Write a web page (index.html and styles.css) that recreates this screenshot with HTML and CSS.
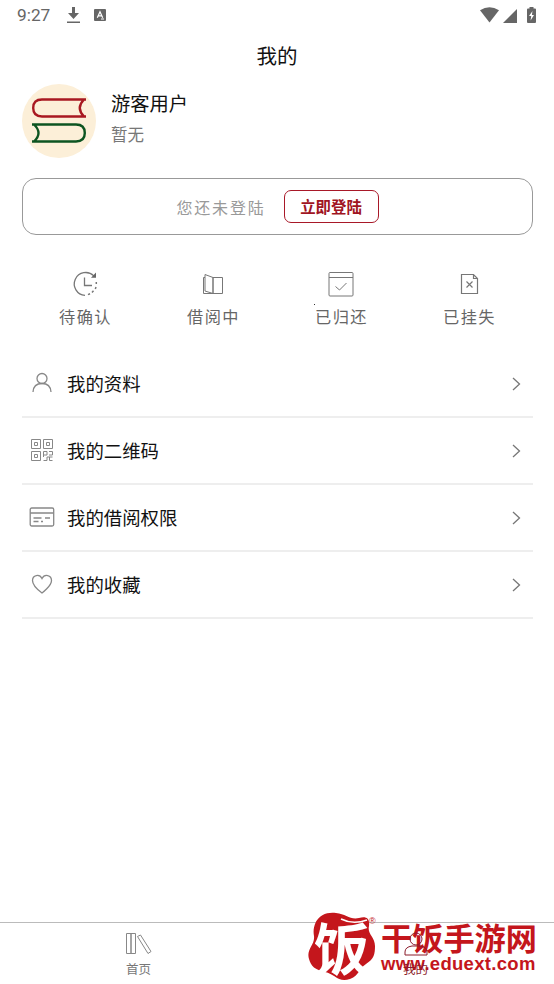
FILE: index.html
```html
<!DOCTYPE html>
<html lang="zh-CN">
<head>
<meta charset="utf-8">
<title>我的</title>
<link rel="stylesheet" href="styles.css">
</head>
<body>
<div class="screen">
  <div class="status">
    <span class="time">9:27</span>
    <svg class="download" width="13" height="17" viewBox="0 0 13 17"><path d="M5 0h3v6h4l-5.500 6L1 6h4zM0 14.500h13v1.600H0z"/></svg>
    <svg class="keyboard" width="12" height="12" viewBox="0 0 12 12"><rect width="12" height="12" rx="1"/><path d="M3.300 8.700L6 2.800l2.700 5.900M4.300 6.800h3.400M7 10h3" fill="none" stroke="#fff" stroke-width="1.200"/></svg>
    <span class="grow"></span>
    <svg width="19" height="16" viewBox="0 0 19 16"><path d="M0 3.200Q9.500-2.800 19 3.200L9.500 15.500z"/></svg>
    <svg class="signal" width="14" height="14" viewBox="0 0 14 14"><path d="M14 0v14H0z"/></svg>
    <svg class="battery" width="9" height="16" viewBox="0 0 9 16"><path d="M2.500 0h4v1.500H8q1 0 1 1V15q0 1-1 1H1q-1 0-1-1V2.500q0-1 1-1h1.500z"/><path d="M5.500 4L2 9h2.200L3.600 13.500 7 8H4.900z" fill="#fff"/></svg>
  </div>
  <h1>我的</h1>
  <div class="profile">
    <div class="avatar">
      <svg width="54" height="46" viewBox="0 0 54 46" fill="none" stroke-width="2.400"><path stroke="#a81820" d="M54 1.500H10Q1.200 1.500 1.200 10T10 18.500H54M52 1.500Q43.500 10 52 18.500"/><path stroke="#0c5420" d="M0 26.500H44Q52.800 26.500 52.800 35T44 43.500H0M2 26.500Q11 35 2 43.500"/></svg>
    </div>
    <div><div class="name">游客用户</div><div class="sub">暂无</div></div>
  </div>
  <div class="login"><span>您还未登陆</span><button>立即登陆</button></div>
  <div class="shortcuts">
    <div class="shortcut"><svg width="28" height="28" viewBox="0 0 28 28"><path d="M14 25.300A11.400 11.400 0 1 1 22.800 5.900M13.500 7.500v8h7.500" stroke-width="1.300"/><path d="M25 2.500v5.200h-5z" fill="#666" stroke="none"/><path d="M25.300 12v2M25 17l-.7 2M22.500 20.800l-1.500 1.600M19 23.700l-2 .9" stroke-width="1.500"/></svg><span>待确认</span></div>
    <div class="shortcut"><svg width="28" height="28" viewBox="0 0 28 28"><path d="M14 7.500h9.500v16H14zM6 4.500l8 3v16l-8-2.500zM6 7.500H4.500v16H14"/></svg><span>借阅中</span></div>
    <div class="shortcut"><svg width="28" height="28" viewBox="0 0 28 28"><rect x="2" y="2.500" width="24" height="23.500" rx="1"/><path d="M2 7.500h24M8.500 16.500l4 3.500 7-7"/></svg><span>已归还</span></div>
    <div class="shortcut"><svg width="28" height="28" viewBox="0 0 28 28"><path d="M18.500 4.500h-12v19h16v-15l-4-4zv4h4M11.500 11.500l6 6M17.500 11.500l-6 6" stroke-width="1.200"/></svg><span>已挂失</span></div>
    <i class="speck"></i>
  </div>
  <div class="menu">
    <div class="row"><svg class="icon" width="26" height="26" viewBox="0 0 26 26"><circle cx="13" cy="8.500" r="5"/><path d="M4 22Q4.500 13.500 13 13.500T22 22"/></svg><span>我的资料</span><svg class="chevron" width="9" height="14" viewBox="0 0 9 14"><path d="M1 1l6.500 6L1 13"/></svg></div>
    <div class="row"><svg class="icon qr" width="26" height="26" viewBox="0 0 26 26"><path d="M2.500 2.500h9v9h-9zM14.500 2.500h9v9h-9zM2.500 14.500h9v9h-9zM5.500 5.500h3v3h-3zM17.500 5.500h3v3h-3zM5.500 17.500h3v3h-3zM14.500 20v-5.500H18V18h-3.500M20 14.500h3.500V18H20M14.500 23.500H18V20h5.500M20.500 20v3.500h3"/></svg><span>我的二维码</span><svg class="chevron" width="9" height="14" viewBox="0 0 9 14"><path d="M1 1l6.500 6L1 13"/></svg></div>
    <div class="row"><svg class="icon" width="26" height="26" viewBox="0 0 26 26"><rect x="1.200" y="4" width="23.500" height="18" rx="1.500"/><path d="M1.200 9h23.500M4.500 14h8M16 14h5M4.500 17.500h5M12 17.500h2"/></svg><span>我的借阅权限</span><svg class="chevron" width="9" height="14" viewBox="0 0 9 14"><path d="M1 1l6.500 6L1 13"/></svg></div>
    <div class="row"><svg class="icon" width="26" height="26" viewBox="0 0 26 26"><path d="M13 22Q3.500 15 3.500 9.500C3.500 4 10.500 2.500 13 7.500 15.500 2.500 22.500 4 22.500 9.500 22.500 15 13 22 13 22z"/></svg><span>我的收藏</span><svg class="chevron" width="9" height="14" viewBox="0 0 9 14"><path d="M1 1l6.500 6L1 13"/></svg></div>
  </div>
  <div class="tabs">
    <div class="tab"><svg width="28" height="26" viewBox="0 0 28 26"><path d="M1.500 2.500H6v20H1.500zM6 2.500h4.500v20H6zM12.500 5.500l3-1.500 10.500 16.500-3 2z"/></svg><span>首页</span></div>
    <div class="tab active"><svg width="28" height="26" viewBox="0 0 28 26"><circle cx="14" cy="8" r="6"/><path d="M3 24v-3q0-5 7-6h8q7 1 7 6v3z"/></svg><span>我的</span></div>
  </div>
  <div class="watermark">
    <div class="seal">
      <svg width="71" height="70" viewBox="0 0 71 70"><path fill="#c4161c" d="M8 12C12 2 21 0 29 1C39 2 43 8 52 6C59 4 63 6 62 14C60 22 68 25 68 34C68 42 67 47 59 52C51 57 53 63 43 67C31 71 28 62 18 60C8 58 4 54 2 47C-1 37 8 33 7 24C6 19 7 15 8 12z"/><path fill="none" stroke="#fff" stroke-width="1.500" d="M34 7Q46 13 60 8"/></svg>
      <span>饭</span>
    </div>
    <span class="reg">®</span>
    <div class="brand"><div class="brand-name">干饭手游网</div><div class="url">www.eduext.com</div></div>
  </div>
</div>
</body>
</html>
```
FILE: styles.css
```css
* { box-sizing: border-box; }
body { margin: 0; background: #fff; font-family: "Noto Sans CJK SC", sans-serif; color: #111; }
svg { display: block; flex: none; }
.screen { position: relative; width: 554px; height: 984px; display: flex; flex-direction: column; overflow: hidden; }
.status { height: 30px; padding: 0 17px; display: flex; align-items: center; color: #666; fill: #666; flex: none; }
.time { font: 17.300px/30px Roboto, sans-serif; width: 50px; }
.keyboard { margin-left: 14px; }
.grow { flex: 1; }
.signal { margin: 1px 10px 0 4px; }
.battery { margin-right: 1px; }
h1 { margin: 0; height: 54px; font-size: 20.500px; font-weight: 400; line-height: 50px; text-align: center; flex: none; }
.profile { display: flex; height: 94px; padding-left: 22px; gap: 15px; flex: none; }
.avatar { width: 74px; height: 74px; border-radius: 50%; background: #fcefd8; display: flex; align-items: center; justify-content: center; padding-bottom: 1px; }
.name { font-size: 19.300px; line-height: 28px; margin-top: 5px; }
.sub { font-size: 16.500px; line-height: 24px; margin-top: 5px; color: #777; }
.login { height: 57px; margin: 0 21px 0 22px; border: 1px solid #999; border-radius: 14px; display: flex; align-items: center; justify-content: center; gap: 18px; flex: none; }
.login span { font-size: 16px; letter-spacing: 1.800px; color: #999; }
.login button { width: 95px; height: 33px; padding: 0 0 1px; border: 1px solid #a81828; border-radius: 7px; background: #fff; color: #a01422; font: 700 15.400px "Noto Sans CJK SC", sans-serif; }
.shortcuts { position: relative; height: 115px; padding: 35px 21px 0; display: grid; grid-template-columns: repeat(4, 1fr); flex: none; }
.shortcut { display: flex; flex-direction: column; align-items: center; }
.shortcut svg { fill: none; stroke: #777; stroke-width: 1; }
.shortcut span { font-size: 16.200px; letter-spacing: 1.500px; line-height: 24px; margin: 6px 0 0 1px; color: #666; }
.speck { position: absolute; left: 314px; top: 69px; width: 1px; height: 1px; background: #333; }
.menu { margin: 0 21px 0 22px; flex: 1; }
.row { height: 67px; display: flex; align-items: center; border-bottom: 2px solid #eee; padding: 0 12px 2px 7px; font-size: 18.400px; }
.row:first-child { height: 68px; padding-bottom: 0; }
.row span { flex: 1; margin-left: 12px; }
.icon { fill: none; stroke: #888; stroke-width: 1.300; }
.qr { stroke-width: 1; }
.chevron { fill: none; stroke: #777; stroke-width: 1.300; position: relative; top: 1px; }
.tabs { height: 62px; border-top: 1px solid #bbb; display: grid; grid-template-columns: 1fr 1fr; flex: none; }
.tab { display: flex; flex-direction: column; align-items: center; padding-top: 8px; font-size: 12.500px; line-height: 18px; color: #777; }
.tab svg { fill: none; stroke: #888; stroke-width: 1; margin-bottom: 3px; }
.tab.active { position: relative; z-index: 2; color: #8b1c2b; }
.tab.active svg { stroke: #8b1c2b; }
.watermark { position: absolute; left: 307px; top: 912px; display: flex; color: #c4161c; }
.seal { position: relative; width: 71px; height: 72px; }
.seal span { position: absolute; left: 7px; top: -5px; color: #fff; font-size: 56px; line-height: 77px; font-weight: 700; }
.reg { position: absolute; left: 62px; top: 4px; font: 9px/10px "Liberation Sans", sans-serif; }
.brand { margin-left: 3px; }
.brand-name { font-size: 31.200px; line-height: 34px; font-weight: 700; margin-top: 8px; white-space: nowrap; }
.url { font: bold 18.500px/20px "Liberation Sans", sans-serif; letter-spacing: .3px; }
```
